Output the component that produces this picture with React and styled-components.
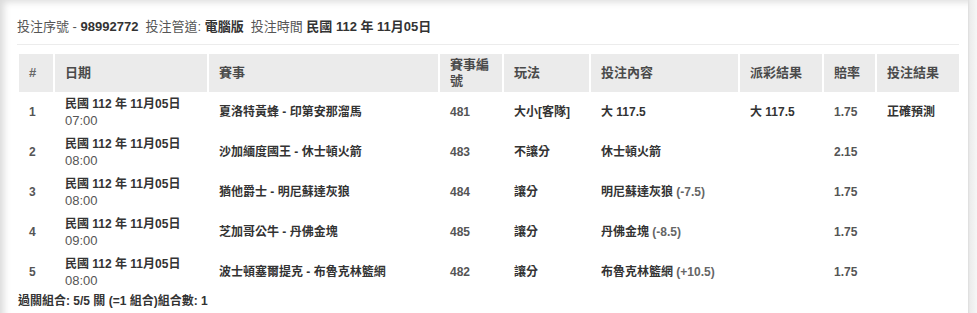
import React from "react";
import styled, { createGlobalStyle } from "styled-components";

const Global = createGlobalStyle`
  html, body { margin: 0; padding: 0; background: #fff; }
  body { font-family: "Liberation Sans", "Noto Sans CJK TC", sans-serif; }
`;

const Frame = styled.div`
  width: 977px;
  height: 313px;
  overflow: hidden;
  display: flex;
`;

const Panel = styled.div`
  flex: 1;
  background: #fff;
  box-shadow: inset 7px 5px 7px -3px rgba(0, 0, 0, 0.14);
  padding: 18px 9px 0 18px;
  color: #333;
`;

const Gutter = styled.div`
  width: 9px;
  background: linear-gradient(to right, #dcdcdc 0px, #ececec 2px, #f6f6f6 9px);
`;

const Info = styled.div`
  font-size: 13px;
  line-height: 18px;
  padding-bottom: 8px;
  border-bottom: 1px solid #ececec;
  margin-left: -1px;
  color: #555;
  white-space: nowrap;
`;

const Strong = styled.b`
  font-weight: bold;
  color: #333;
`;

const Gap = styled.span`
  display: inline-block;
  width: ${(p) => p.$w || 6}px;
`;

const Table = styled.table`
  margin: 9px 0 0 1px;
  width: 940px;
  table-layout: fixed;
  border-collapse: separate;
  border-spacing: 0;
`;

const Col = styled.col`
  width: ${(p) => p.$w}px;
`;

const Th = styled.th`
  height: 38px;
  box-sizing: border-box;
  background: #ebebeb;
  padding: 0 10px;
  text-align: left;
  vertical-align: middle;
  font-size: 13px;
  line-height: 16px;
  font-weight: bold;
  color: #4a4a4a;
  border-left: 2px solid #fff;
  &:first-child { border-left: none; color: #666; }
`;

const Td = styled.td`
  height: 40px;
  box-sizing: border-box;
  padding: 3px 10px;
  vertical-align: middle;
  font-size: 12px;
  line-height: 16px;
  font-weight: bold;
  color: ${(p) => (p.$muted ? "#555" : "#333")};
  border-left: 2px solid #fff;
  white-space: nowrap;
  &:first-child { border-left: none; }
`;

const Time = styled.div`
  font-weight: normal;
  color: #555;
  font-size: 13px;
  line-height: 17px;
`;

const Handicap = styled.span`
  color: #666;
`;

const Footer = styled.div`
  font-size: 12px;
  line-height: 18px;
  font-weight: bold;
  color: #333;
`;

const rows = [
  { n: 1, t: "07:00", game: "夏洛特黃蜂 - 印第安那溜馬", id: "481", play: "大小[客隊]", bet: "大 117.5", hc: "", payout: "大 117.5", odds: "1.75", result: "正確預測" },
  { n: 2, t: "08:00", game: "沙加緬度國王 - 休士頓火箭", id: "483", play: "不讓分", bet: "休士頓火箭", hc: "", payout: "", odds: "2.15", result: "" },
  { n: 3, t: "08:00", game: "猶他爵士 - 明尼蘇達灰狼", id: "484", play: "讓分", bet: "明尼蘇達灰狼", hc: "(-7.5)", payout: "", odds: "1.75", result: "" },
  { n: 4, t: "09:00", game: "芝加哥公牛 - 丹佛金塊", id: "485", play: "讓分", bet: "丹佛金塊", hc: "(-8.5)", payout: "", odds: "1.75", result: "" },
  { n: 5, t: "08:00", game: "波士頓塞爾提克 - 布魯克林籃網", id: "482", play: "讓分", bet: "布魯克林籃網", hc: "(+10.5)", payout: "", odds: "1.75", result: "" },
];

const widths = [34, 154, 231, 64, 87, 149, 84, 53, 84];
const heads = ["#", "日期", "賽事", "賽事編號", "玩法", "投注內容", "派彩結果", "賠率", "投注結果"];

export default function App() {
  return (
    <>
      <Global />
      <Frame>
        <Panel>
          <Info>
            投注序號 - <Strong>98992772</Strong>
            <Gap $w={7} />
            投注管道: <Strong>電腦版</Strong>
            <Gap $w={7} />
            投注時間 <Strong>民國 112 年 11月05日</Strong>
          </Info>
          <Table>
            <colgroup>
              {widths.map((w, i) => (
                <Col key={i} $w={w} />
              ))}
            </colgroup>
            <thead>
              <tr>
                {heads.map((h) => (
                  <Th key={h}>{h}</Th>
                ))}
              </tr>
            </thead>
            <tbody>
              {rows.map((r) => (
                <tr key={r.n}>
                  <Td $muted>{r.n}</Td>
                  <Td>
                    民國 112 年 11月05日
                    <Time>{r.t}</Time>
                  </Td>
                  <Td>{r.game}</Td>
                  <Td $muted>{r.id}</Td>
                  <Td>{r.play}</Td>
                  <Td>
                    {r.bet}
                    {r.hc && <Handicap> {r.hc}</Handicap>}
                  </Td>
                  <Td>{r.payout}</Td>
                  <Td $muted>{r.odds}</Td>
                  <Td>{r.result}</Td>
                </tr>
              ))}
            </tbody>
          </Table>
          <Footer>過關組合: 5/5 關 (=1 組合)組合數: 1</Footer>
        </Panel>
        <Gutter />
      </Frame>
    </>
  );
}
